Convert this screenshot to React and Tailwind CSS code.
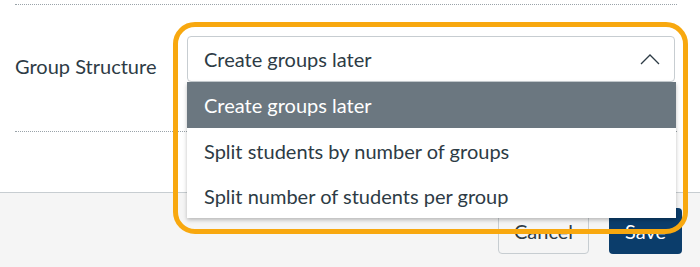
const options = [
  "Create groups later",
  "Split students by number of groups",
  "Split number of students per group",
];

export default function App() {
  return (
    <div className="relative w-[700px] h-[267px] overflow-hidden bg-white text-[#2d3b45] font-['Lato',sans-serif]">
      <div className="pl-[15px] pr-[23px] pt-[4px]">
        <div className="border-t border-dotted border-[#9aa3a9]" />
        <div className="flex items-start h-[126px] pt-[31px]">
          <label className="w-[172px] mt-[16px] text-[20px] leading-[28px]">Group Structure</label>
          <div className="flex items-center justify-between w-[488px] h-[46px] pl-[16px] pr-[14px] border border-[#c7cdd1] rounded-[4px] bg-white text-[20px]">
            <span>Create groups later</span>
            <svg width="20" height="11" viewBox="0 0 20 11" fill="none" className="mt-[1px]">
              <path d="M1 10 L10 1 L19 10" stroke="#2d3b45" strokeWidth="1.3" />
            </svg>
          </div>
        </div>
        <div className="border-t border-dotted border-[#9aa3a9]" />
      </div>

      <div className="mt-[60px] h-[80px] bg-[#f5f5f5] border-t border-[#c7cdd1] flex justify-end gap-[20px] pt-[15px] pr-[18px]">
        <button className="w-[91px] h-[46px] rounded-[4px] border border-[#c7cdd1] bg-[#f5f5f5] text-[20px] text-[#2d3b45]">
          Cancel
        </button>
        <button className="w-[73px] h-[46px] rounded-[4px] bg-[#0b3d6b] text-[20px] text-white">
          Save
        </button>
      </div>

      <ul className="absolute left-[187px] top-[82px] w-[489px] bg-white shadow-[0_2px_4px_rgba(0,0,0,0.25)] text-[20px]">
        {options.map((o, i) => (
          <li
            key={o}
            className={
              i === 0
                ? "h-[46px] flex items-center pl-[17px] bg-[#6b7780] text-white"
                : "h-[45px] flex items-center pl-[17px] text-[#2d3b45]"
            }
          >
            {o}
          </li>
        ))}
      </ul>

      <div className="absolute left-[173px] top-[22px] w-[515px] h-[212px] border-[5px] border-[#f8a80f] rounded-[22px] pointer-events-none" />
    </div>
  );
}
